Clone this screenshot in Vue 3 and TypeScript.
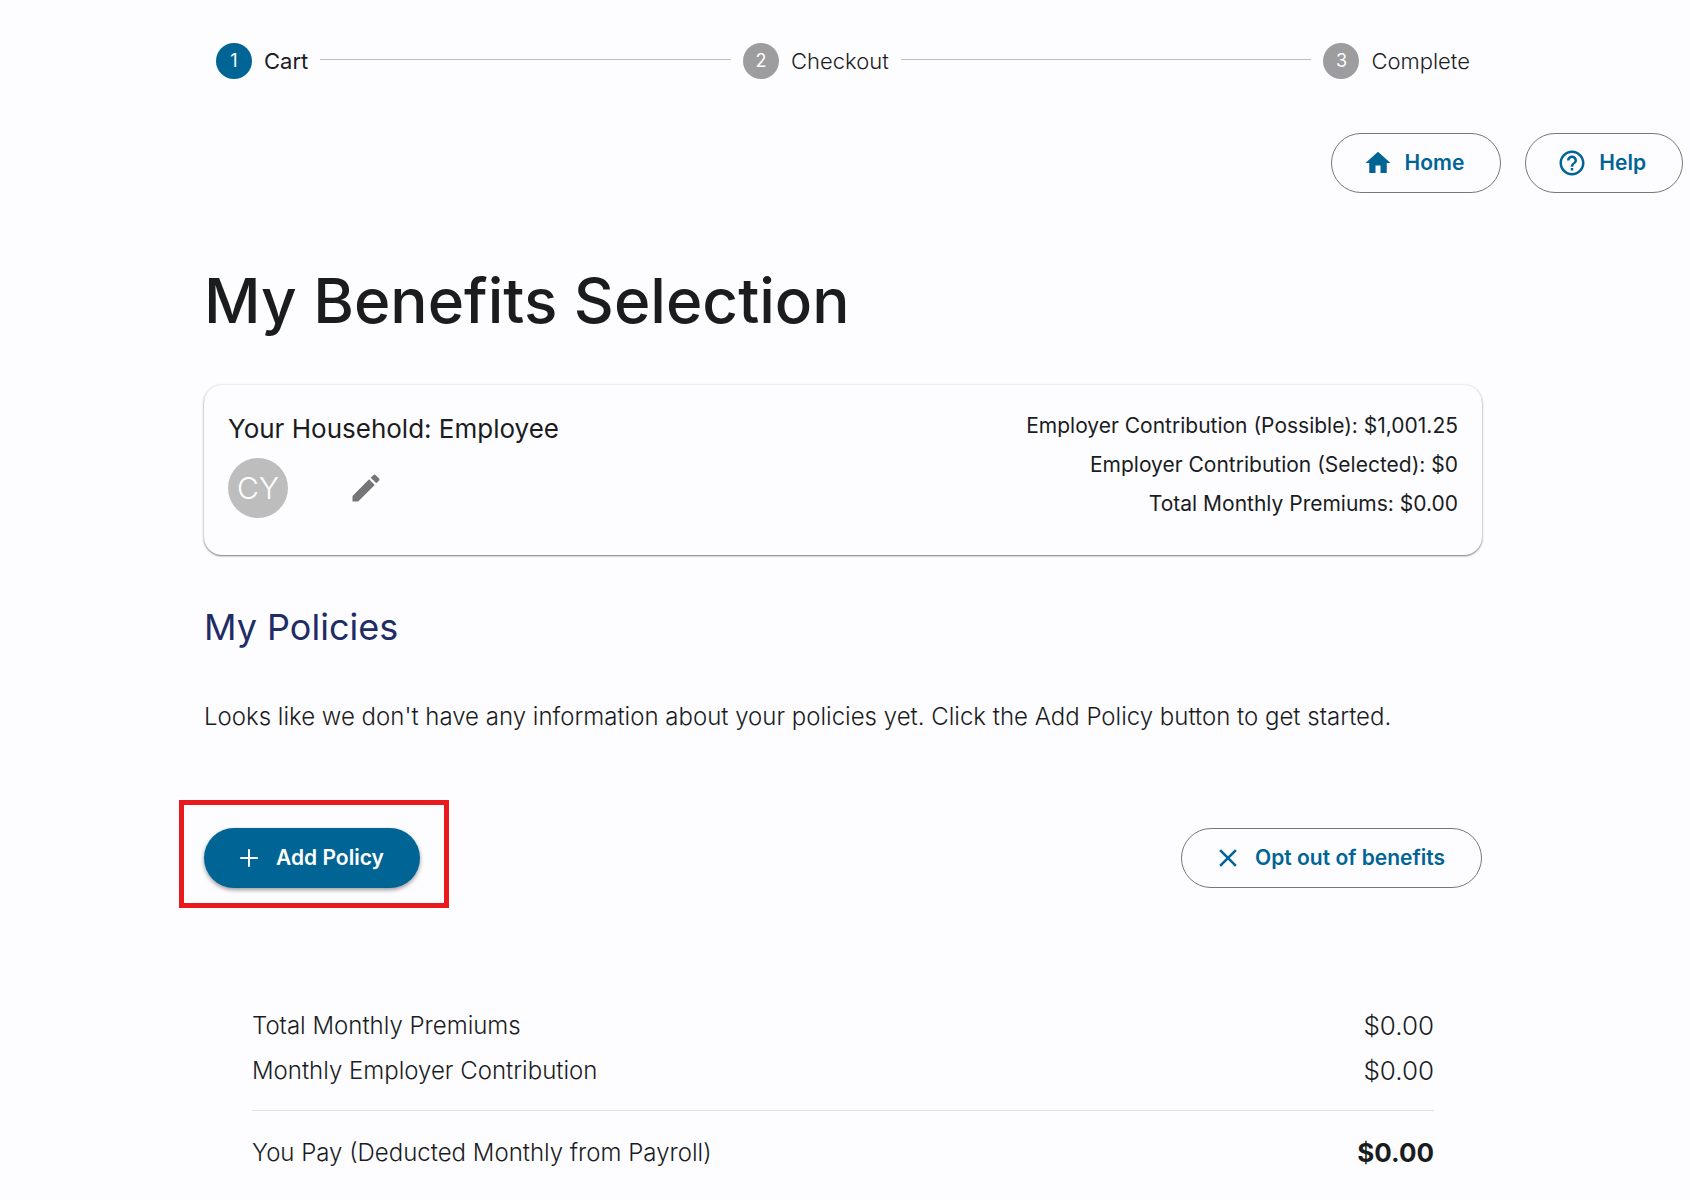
<script setup lang="ts">
interface Step {
  label: string
  active: boolean
}

const steps: Step[] = [
  { label: 'Cart', active: true },
  { label: 'Checkout', active: false },
  { label: 'Complete', active: false },
]

const contributions: string[] = [
  'Employer Contribution (Possible): $1,001.25',
  'Employer Contribution (Selected): $0',
  'Total Monthly Premiums: $0.00',
]
</script>

<template>
  <div class="page">
    <ol class="stepper">
      <template v-for="(step, i) in steps" :key="step.label">
        <li v-if="i > 0" class="connector" aria-hidden="true"></li>
        <li class="step" :class="{ active: step.active }">
          <span class="step-number">{{ i + 1 }}</span>
          <span class="step-label">{{ step.label }}</span>
        </li>
      </template>
    </ol>

    <nav class="toolbar">
      <button type="button" class="btn outlined">
        <svg class="icon" viewBox="0 0 24 24" aria-hidden="true">
          <path d="M10 20v-6h4v6h5v-8h3L12 3 2 12h3v8z" />
        </svg>
        Home
      </button>
      <button type="button" class="btn outlined">
        <svg class="icon" viewBox="0 0 24 24" aria-hidden="true">
          <path
            d="M11 18h2v-2h-2v2zm1-16C6.48 2 2 6.48 2 12s4.48 10 10 10 10-4.48 10-10S17.52 2 12 2zm0 18c-4.41 0-8-3.59-8-8s3.59-8 8-8 8 3.59 8 8-3.59 8-8 8zm0-14c-2.21 0-4 1.79-4 4h2c0-1.1.9-2 2-2s2 .9 2 2c0 2-3 1.75-3 5h2c0-2.25 3-2.5 3-5 0-2.21-1.79-4-4-4z"
          />
        </svg>
        Help
      </button>
    </nav>

    <main class="content">
      <h1>My Benefits Selection</h1>

      <section class="card">
        <div>
          <p class="household">Your Household: Employee</p>
          <div class="members">
            <span class="avatar">CY</span>
            <button type="button" class="edit" aria-label="Edit household">
              <svg viewBox="0 0 24 24" aria-hidden="true">
                <path
                  d="M3 17.25V21h3.75L17.81 9.94l-3.75-3.75L3 17.25zM20.71 7.04c.39-.39.39-1.02 0-1.41l-2.34-2.34a.9959.9959 0 0 0-1.41 0l-1.83 1.83 3.75 3.75 1.83-1.83z"
                />
              </svg>
            </button>
          </div>
        </div>
        <ul class="contributions">
          <li v-for="line in contributions" :key="line">{{ line }}</li>
        </ul>
      </section>

      <h2>My Policies</h2>
      <p class="empty">
        Looks like we don't have any information about your policies yet. Click the Add Policy button to get started.
      </p>

      <div class="actions">
        <div class="highlight">
          <button type="button" class="btn filled">
            <svg class="icon" viewBox="0 0 24 24" aria-hidden="true">
              <path d="M19 12.8h-6.2V19h-1.6v-6.2H5v-1.6h6.2V5h1.6v6.2H19z" />
            </svg>
            Add Policy
          </button>
        </div>
        <button type="button" class="btn outlined">
          <svg class="icon" viewBox="0 0 24 24" aria-hidden="true">
            <path
              d="M19 6.41 17.59 5 12 10.59 6.41 5 5 6.41 10.59 12 5 17.59 6.41 19 12 13.41 17.59 19 19 17.59 13.41 12z"
            />
          </svg>
          Opt out of benefits
        </button>
      </div>

      <dl class="summary">
        <div class="row">
          <dt>Total Monthly Premiums</dt>
          <dd>$0.00</dd>
        </div>
        <div class="row">
          <dt>Monthly Employer Contribution</dt>
          <dd>$0.00</dd>
        </div>
        <div class="row total">
          <dt>You Pay (Deducted Monthly from Payroll)</dt>
          <dd>$0.00</dd>
        </div>
      </dl>
    </main>
  </div>
</template>

<style>
body {
  background: #fdfcff;
}
</style>

<style scoped>
.page {
  box-sizing: border-box;
  padding: 43px 0 24px;
  color: #1a1c1e;
  font-family: Inter, "Liberation Sans", sans-serif;
  font-size: 24px;
  font-weight: 300;
  line-height: 36px;
}

ol,
ul,
dl,
dd,
h1,
h2,
p {
  margin: 0;
  padding: 0;
  list-style: none;
}

.stepper {
  display: flex;
  height: 36px;
  margin: 0 208px 0 204px;
}

.step {
  display: flex;
  gap: 12px;
  padding: 0 12px;
}

.step-number {
  width: 36px;
  height: 36px;
  border-radius: 50%;
  background: #9d9c9e;
  color: #fff;
  font-size: 18px;
  font-weight: 400;
  line-height: 35px;
  text-align: center;
}

.active .step-number {
  background: #006495;
}

.step-label {
  font-size: 22px;
  line-height: 37px;
}

.active .step-label {
  font-weight: 400;
}

.connector {
  flex: 1;
  height: 1px;
  margin-top: 16px;
  background: #bdbdbd;
}

.toolbar {
  display: flex;
  justify-content: flex-end;
  gap: 24px;
  margin-top: 54px;
  padding-right: 7px;
}

.btn {
  display: flex;
  align-items: center;
  gap: 12px;
  box-sizing: border-box;
  height: 60px;
  padding: 0 36px 0 31px;
  border: 1px solid #72787e;
  border-radius: 30px;
  background: transparent;
  color: #006495;
  font-family: inherit;
  font-size: 21px;
  font-weight: 600;
  line-height: 30px;
  white-space: nowrap;
}

.btn.filled {
  padding-left: 30px;
  border: 0;
  background: #006495;
  color: #fff;
  box-shadow: 0 2px 4px rgba(0, 0, 0, 0.4);
}

.icon {
  width: 30px;
  height: 30px;
  fill: currentColor;
}

.content {
  padding: 0 208px 0 204px;
}

h1 {
  margin-top: 60px;
  font-size: 62px;
  font-weight: 500;
  line-height: 96px;
}

.card {
  display: flex;
  justify-content: space-between;
  box-sizing: border-box;
  min-height: 170px;
  margin-top: 36px;
  padding: 24px;
  border-radius: 18px;
  box-shadow: 0 1px 2px rgba(0, 0, 0, 0.5), 0 0 3px rgba(0, 0, 0, 0.1);
}

.household {
  font-size: 26px;
  font-weight: 400;
  line-height: 40px;
}

.members {
  display: flex;
  align-items: center;
  gap: 48px;
  margin-top: 9px;
}

.avatar {
  width: 60px;
  border-radius: 50%;
  background: #bdbdbd;
  color: #fff;
  font-size: 30px;
  line-height: 60px;
  text-align: center;
}

.edit {
  padding: 12px;
  border: 0;
  background: none;
}

.edit svg {
  display: block;
  width: 36px;
  height: 36px;
  fill: #757575;
}

.contributions {
  margin-top: -3px;
  font-size: 21px;
  font-weight: 400;
  line-height: 39px;
  text-align: right;
}

h2 {
  margin-top: 48px;
  color: #202c66;
  font-size: 36px;
  font-weight: 400;
  line-height: 48px;
}

.empty {
  margin-top: 48px;
}

.actions {
  display: flex;
  justify-content: space-between;
  margin-top: 93px;
}

.highlight {
  position: relative;
}

.highlight::after {
  position: absolute;
  inset: -28px -29px -20px -25px;
  border: 5px solid #e81a1c;
  content: "";
  pointer-events: none;
}

.summary {
  margin-top: 115px;
  padding: 0 48px;
}

.row {
  display: flex;
  justify-content: space-between;
  line-height: 45px;
}

.row dd {
  font-size: 26px;
}

.total {
  margin-top: 17px;
  padding-top: 19px;
  border-top: 1px solid #dde3ea;
}

.total dd {
  font-weight: 700;
}
</style>
